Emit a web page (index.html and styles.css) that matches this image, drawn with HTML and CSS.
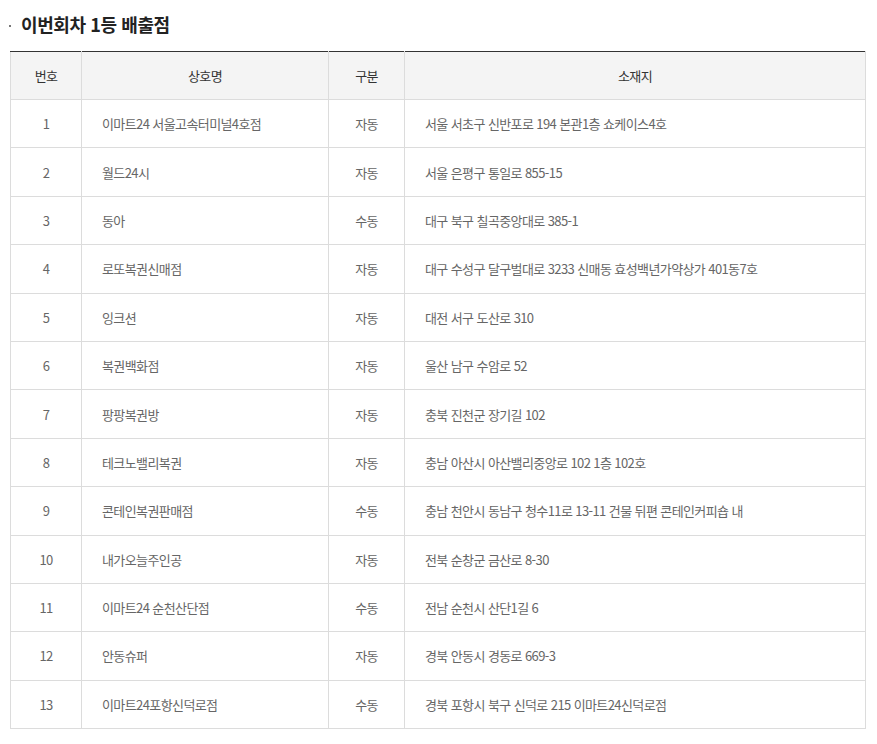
FILE: index.html
```html
<!DOCTYPE html>
<html lang="ko">
<head>
<meta charset="utf-8">
<link rel="stylesheet" href="styles.css">
</head>
<body>
<div class="wrap">
  <h3 class="title"><span class="dot"></span>이번회차 1등 배출점</h3>
  <table class="tbl">
    <colgroup>
      <col class="c1"><col class="c2"><col class="c3"><col class="c4">
    </colgroup>
    <thead>
      <tr><th>번호</th><th>상호명</th><th>구분</th><th>소재지</th></tr>
    </thead>
    <tbody>
      <tr><td class="ct">1</td><td>이마트24 서울고속터미널4호점</td><td class="ct">자동</td><td>서울 서초구 신반포로 194 본관1층 쇼케이스4호</td></tr>
      <tr><td class="ct">2</td><td>월드24시</td><td class="ct">자동</td><td>서울 은평구 통일로 855-15</td></tr>
      <tr><td class="ct">3</td><td>동아</td><td class="ct">수동</td><td>대구 북구 칠곡중앙대로 385-1</td></tr>
      <tr><td class="ct">4</td><td>로또복권신매점</td><td class="ct">자동</td><td>대구 수성구 달구벌대로 3233 신매동 효성백년가약상가 401동7호</td></tr>
      <tr><td class="ct">5</td><td>잉크션</td><td class="ct">자동</td><td>대전 서구 도산로 310</td></tr>
      <tr><td class="ct">6</td><td>복권백화점</td><td class="ct">자동</td><td>울산 남구 수암로 52</td></tr>
      <tr><td class="ct">7</td><td>팡팡복권방</td><td class="ct">자동</td><td>충북 진천군 장기길 102</td></tr>
      <tr><td class="ct">8</td><td>테크노밸리복권</td><td class="ct">자동</td><td>충남 아산시 아산밸리중앙로 102 1층 102호</td></tr>
      <tr><td class="ct">9</td><td>콘테인복권판매점</td><td class="ct">수동</td><td>충남 천안시 동남구 청수11로 13-11 건물 뒤편 콘테인커피숍 내</td></tr>
      <tr><td class="ct">10</td><td>내가오늘주인공</td><td class="ct">자동</td><td>전북 순창군 금산로 8-30</td></tr>
      <tr><td class="ct">11</td><td>이마트24 순천산단점</td><td class="ct">수동</td><td>전남 순천시 산단1길 6</td></tr>
      <tr><td class="ct">12</td><td>안동슈퍼</td><td class="ct">자동</td><td>경북 안동시 경동로 669-3</td></tr>
      <tr><td class="ct">13</td><td>이마트24포항신덕로점</td><td class="ct">수동</td><td>경북 포항시 북구 신덕로 215 이마트24신덕로점</td></tr>
    </tbody>
  </table>
</div>
</body>
</html>
```
FILE: styles.css
```css
* { box-sizing: border-box; }
html, body { margin: 0; padding: 0; background: #fff; }
body {
  font-family: "Noto Sans CJK KR", "Noto Sans", sans-serif;
  color: #666;
}
.wrap {
  padding: 11px 0 0 10px;
  width: 865px;
}
.title {
  margin: 0 0 14px 0;
  font-size: 18px;
  font-weight: 700;
  color: #222;
  line-height: 26px;
  display: flex;
  align-items: center;
  letter-spacing: -0.4px;
}
.dot {
  display: inline-block;
  width: 2px;
  height: 2px;
  background: #777;
  margin: 3px 10px 0 -1px;
}
.tbl {
  width: 855px;
  border-collapse: collapse;
  table-layout: fixed;
  font-size: 13px;
  letter-spacing: -0.6px;
  border-top: 1px solid #333;
}
.c1 { width: 71px; }
.c2 { width: 247px; }
.c3 { width: 76px; }
.c4 { width: 461px; }
.tbl th {
  background: #f4f4f4;
  color: #333;
  font-weight: 400;
  height: 48px;
  padding: 0;
  border: 1px solid #dcdcdc;
  border-top: 1px solid #333;
  text-align: center;
}
.tbl td {
  height: 48.4px;
  padding: 0 0 0 20px;
  border: 1px solid #dcdcdc;
  text-align: left;
  white-space: nowrap;
}
.tbl td.ct {
  text-align: center;
  padding: 0;
}
```
